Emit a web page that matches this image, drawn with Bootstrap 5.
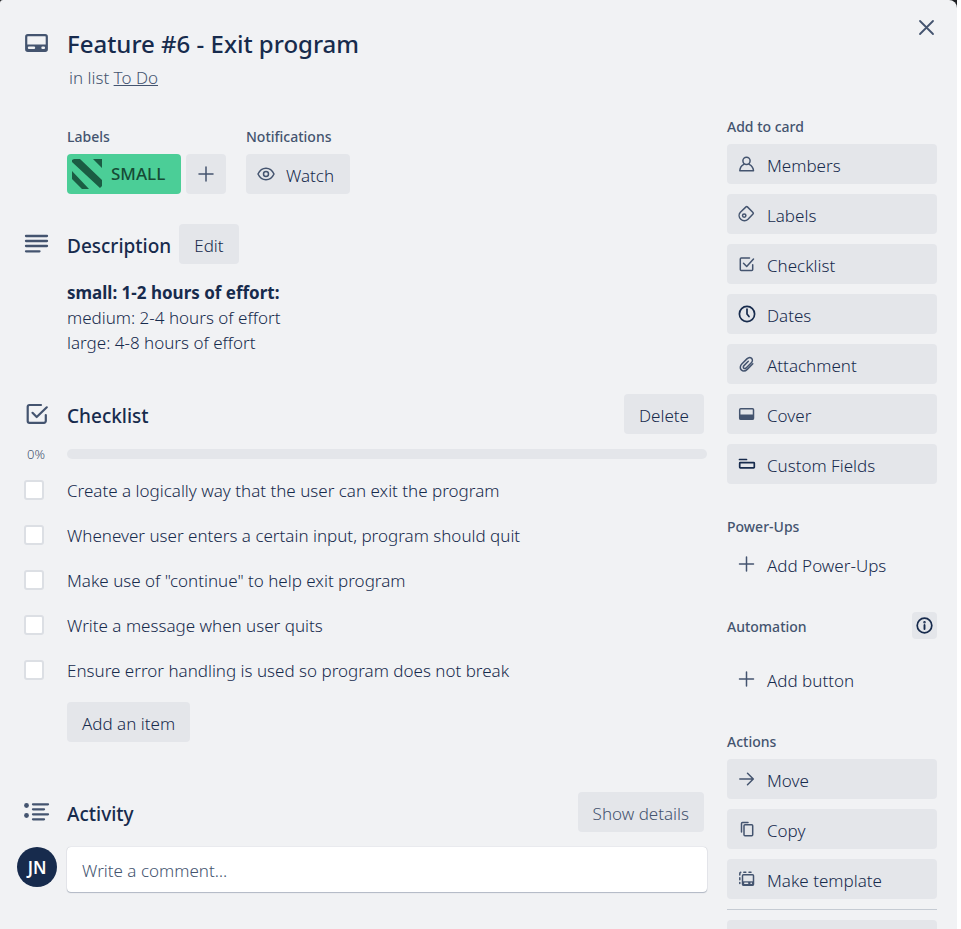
<!DOCTYPE html>
<html lang="en">
<head>
<meta charset="utf-8">
<meta name="viewport" content="width=device-width, initial-scale=1">
<title>Feature #6 - Exit program</title>
<link href="https://cdn.jsdelivr.net/npm/bootstrap@5.3.0/dist/css/bootstrap.min.css" rel="stylesheet">
<style>
  :root { --ink: #172b4d; --subtle: #44546f; --surface: #f1f2f4; --fill: #e4e6ea; }
  body { font-family: "Noto Sans", "Open Sans", sans-serif; font-size: 17px; font-weight: 300; line-height: 25px; color: var(--ink); background: #fff; height: 100vh; overflow: hidden; }
  .backdrop { background: #1d1f22; margin-right: 4px; }
  .dialog-card { background: var(--surface); border-radius: 3px 8px 0 0; padding: 24px 20px 0 17px; min-height: 100vh; gap: 20px; }
  .close-btn { top: 17px; right: 20px; }
  h1, h2, h3, p, ul { margin: 0; }
  strong { font-weight: 700; }
  .dialog-title { font-size: 24px; font-weight: 500; line-height: 40px; }
  .subtle, .subtle a { color: var(--subtle); }
  .list-line { padding: 1px 0 0 2px; }
  .section-title { font-size: 19px; font-weight: 500; line-height: 40px; padding-top: 2px; height: 40px; }
  .group-title { font-size: 14px; font-weight: 500; line-height: 20px; margin-bottom: 7px; color: var(--subtle); }
  .btn-soft { --bs-btn-bg: var(--fill); --bs-btn-hover-bg: #d5d9e0; --bs-btn-color: var(--ink); --bs-btn-border-width: 0; --bs-btn-border-radius: 4px; --bs-btn-font-size: 17px; --bs-btn-font-weight: 300; --bs-btn-line-height: 25px; --bs-btn-padding-x: 15px; --bs-btn-padding-y: 0; height: 40px; white-space: nowrap; }
  .btn-soft > span { display: block; padding-top: 3px; }
  .btn-plain { --bs-btn-bg: transparent; }
  .icon-btn { --bs-btn-padding-x: 10px; display: flex; align-items: center; gap: 10px; }
  .gutter { flex: 0 0 50px; padding-left: 7px; }
  .indent { padding-left: 50px; }
  .dialog-aside { flex: 0 0 210px; margin-top: 93px; }
  .aside-group { margin-bottom: 33px; }
  .aside-stack { display: grid; gap: 10px; }
  .automation-stack { margin-top: 22px; }
  svg { display: block; flex: none; color: var(--subtle); fill: none; stroke: currentColor; stroke-width: 1.5; stroke-linecap: round; stroke-linejoin: round; }
  .ink-icon { color: var(--ink); }
  .meta-row { margin-top: 37px; gap: 20px; }
  .label-chip { --bs-btn-bg: #4bce97; --bs-btn-color: #164b35; --bs-btn-hover-bg: #7ee2b8; --bs-btn-hover-color: #164b35; --bs-btn-border-width: 0; --bs-btn-border-radius: 4px; --bs-btn-font-size: 17px; --bs-btn-font-weight: 500; --bs-btn-padding-x: 5px; --bs-btn-padding-y: 0; height: 40px; width: 114px; display: flex; align-items: center; gap: 9px; }
  .label-chip svg { color: #1b5c43; }
  .chip-row { gap: 5px; }
  .description-section { margin-top: 30px; }
  .description { padding-top: 16px; }
  .checklist-section { margin-top: 39px; }
  .activity-section { margin-top: 50px; }
  .comment-row { margin-top: 15px; }
  .header-action { margin-right: 3px; }
  .progress-row { margin-top: 9px; }
  .percent { flex: 0 0 50px; font-size: 13px; line-height: 20px; padding: 1px 0 0 10px; }
  .progress-line { --bs-progress-height: 10px; --bs-progress-bg: var(--fill); --bs-progress-border-radius: 5px; }
  .progress-line .progress-bar { background: #5ba4cf; }
  .check-list { padding-top: 3px; }
  .check-row { height: 45px; }
  .check-row label { padding-top: 1px; }
  .check-row .form-check-input { display: block; width: 20px; height: 20px; margin: 0; border: 2px solid #dcdfe4; border-radius: 3px; background-color: #fff; }
  .add-item { margin-top: 10px; }
  .avatar-dot { width: 40px; height: 40px; background: var(--ink); color: #fff; font-size: 17px; font-weight: 600; }
  .avatar-col { flex: 0 0 50px; }
  .comment-box { height: 45px; border: 0; border-radius: 4px; padding: 2px 15px 0; font-size: 17px; font-weight: 300; color: var(--ink); box-shadow: 0 1px 1px #091e4240, 0 0 1px #091e424f; }
  .comment-box::placeholder { color: var(--subtle); opacity: 1; }
  .info-btn { --bs-btn-padding-x: 4px; width: 25px; height: 27px; margin: -5px 0 -2px; }
  .aside-rule { margin: 10px 0; border-top: 1px solid #8590a2; opacity: .4; }
</style>
</head>
<body>
<div class="backdrop">
<main class="dialog-card position-relative d-flex">
  <button type="button" class="close-btn btn p-0 border-0 position-absolute" aria-label="Close">
    <svg width="21" height="21" viewBox="0 0 21 21"><path d="M4 4l13 13M17 4L4 17" stroke-width="1.800"/></svg>
  </button>

  <div class="flex-grow-1">
    <header class="d-flex">
      <div class="gutter pt-2"><svg width="25" height="22" viewBox="0 0 25 22"><rect x="2.200" y="3.200" width="20.600" height="15.600" rx="1.600" stroke-width="2.200"/><path d="M2 12.500h21v6h-21z" fill="currentColor" stroke="none"/><path d="M5 15.700h5M18.500 15.700h1.400" stroke="#f1f2f4" stroke-width="2.400"/></svg></div>
      <div>
        <h1 class="dialog-title">Feature #6 - Exit program</h1>
        <p class="list-line subtle">in list <a href="#">To Do</a></p>
      </div>
    </header>

    <div class="meta-row indent d-flex">
      <section>
        <h3 class="group-title">Labels</h3>
        <div class="chip-row d-flex">
          <button type="button" class="btn label-chip">
            <svg width="30" height="30" viewBox="0 0 30 30"><path d="M2 0h6l22 21v6l-2 2L0 3V1zM21 0h9v9zM0 12l17 18h-7L0 20z" fill="currentColor" stroke="none"/></svg>
            <span>SMALL</span>
          </button>
          <button type="button" class="btn btn-soft icon-btn" aria-label="Add a label">
            <svg width="20" height="20" viewBox="0 0 20 20"><path d="M10 3v14M3 10h14"/></svg>
          </button>
        </div>
      </section>
      <section>
        <h3 class="group-title">Notifications</h3>
        <button type="button" class="btn btn-soft icon-btn pe-3">
          <svg width="20" height="20" viewBox="0 0 20 20"><path d="M2 10c1.800-3.800 4.600-5.800 8-5.800s6.200 2 8 5.800c-1.800 3.800-4.600 5.800-8 5.800S3.800 13.800 2 10z"/><circle cx="10" cy="10" r="2.500"/></svg>
          <span>Watch</span>
        </button>
      </section>
    </div>

    <section class="description-section">
      <div class="d-flex">
        <div class="gutter pt-2"><svg width="25" height="24" viewBox="0 0 25 24"><path d="M2 4h21M2 9h21M2 14h21M2 19.300h13.500" stroke-width="2.300"/></svg></div>
        <h2 class="section-title">Description</h2>
        <button type="button" class="btn btn-soft ms-2"><span>Edit</span></button>
      </div>
      <div class="description indent">
        <p><strong>small: 1-2 hours of effort:</strong><br>medium: 2-4 hours of effort<br>large: 4-8 hours of effort</p>
      </div>
    </section>

    <section class="checklist-section">
      <div class="d-flex">
        <div class="gutter pt-2"><svg width="26" height="25" viewBox="0 0 26 25"><path d="M17 3H5.500A1.800 1.800 0 0 0 3.700 4.800V19a1.800 1.800 0 0 0 1.800 1.800H20a1.800 1.800 0 0 0 1.800-1.800V13" stroke-width="2.200"/><path d="M8.500 10.800l4.200 4.200L22.800 5.300" stroke-width="2.200"/></svg></div>
        <h2 class="section-title">Checklist</h2>
        <button type="button" class="btn btn-soft header-action ms-auto"><span>Delete</span></button>
      </div>
      <div class="progress-row d-flex align-items-center">
        <div class="percent subtle">0%</div>
        <div class="progress progress-line flex-grow-1" role="progressbar" aria-label="Checklist progress" aria-valuenow="0" aria-valuemin="0" aria-valuemax="100"><div class="progress-bar" style="width: 0%"></div></div>
      </div>
      <ul class="check-list list-unstyled">
        <li class="check-row d-flex align-items-center"><div class="gutter"><input class="form-check-input" type="checkbox" id="item1"></div><label for="item1">Create a logically way that the user can exit the program</label></li>
        <li class="check-row d-flex align-items-center"><div class="gutter"><input class="form-check-input" type="checkbox" id="item2"></div><label for="item2">Whenever user enters a certain input, program should quit</label></li>
        <li class="check-row d-flex align-items-center"><div class="gutter"><input class="form-check-input" type="checkbox" id="item3"></div><label for="item3">Make use of "continue" to help exit program</label></li>
        <li class="check-row d-flex align-items-center"><div class="gutter"><input class="form-check-input" type="checkbox" id="item4"></div><label for="item4">Write a message when user quits</label></li>
        <li class="check-row d-flex align-items-center"><div class="gutter"><input class="form-check-input" type="checkbox" id="item5"></div><label for="item5">Ensure error handling is used so program does not break</label></li>
      </ul>
      <div class="add-item indent"><button type="button" class="btn btn-soft d-block"><span>Add an item</span></button></div>
    </section>

    <section class="activity-section">
      <div class="d-flex">
        <div class="gutter pt-2 ps-1"><svg width="30" height="24" viewBox="0 0 30 24"><path d="M12 4.300h15M12 9.300h11M12 14.300h15M12 19.300h11" stroke-width="2.300"/><circle cx="5.500" cy="5.500" r="2.400" fill="currentColor" stroke="none"/><circle cx="5.500" cy="15.500" r="2.400" fill="currentColor" stroke="none"/></svg></div>
        <h2 class="section-title">Activity</h2>
        <button type="button" class="btn btn-soft subtle header-action ms-auto"><span>Show details</span></button>
      </div>
      <div class="comment-row d-flex">
        <div class="avatar-col"><div class="avatar-dot rounded-circle d-flex align-items-center justify-content-center">JN</div></div>
        <input type="text" class="comment-box form-control" placeholder="Write a comment…" aria-label="Write a comment">
      </div>
    </section>
  </div>

  <aside class="dialog-aside">
    <section class="aside-group">
      <h3 class="group-title">Add to card</h3>
      <div class="aside-stack">
        <button type="button" class="btn btn-soft icon-btn"><svg width="20" height="20" viewBox="0 0 20 20"><circle cx="9.500" cy="6.800" r="3.600"/><path d="M6.800 10.300C4.500 11.500 3 13.500 2.800 16.800h13.700C16.300 13.500 14.600 11.500 12.200 10.300"/></svg><span>Members</span></button>
        <button type="button" class="btn btn-soft icon-btn"><svg width="20" height="20" viewBox="0 0 20 20"><path d="M3.400 8.200L9 2.900a1 1 0 0 1 1.400 0l5.600 5.600a1 1 0 0 1 0 1.400l-5 5.300C9 17.200 5.800 17.100 3.800 15.200 1.700 13.200 1.600 10.100 3.400 8.200z"/><circle cx="7.200" cy="11.600" r="1.700"/></svg><span>Labels</span></button>
        <button type="button" class="btn btn-soft icon-btn"><svg width="20" height="20" viewBox="0 0 20 20"><path d="M12.500 4H4.300a1 1 0 0 0-1 1v10.400a1 1 0 0 0 1 1h10.400a1 1 0 0 0 1-1v-4.600"/><path d="M6.500 9.300l3.200 3.200L16.500 5"/></svg><span>Checklist</span></button>
        <button type="button" class="btn btn-soft icon-btn"><svg class="ink-icon" width="20" height="20" viewBox="0 0 20 20"><circle cx="10" cy="10" r="7.600" stroke-width="1.700"/><path d="M10 5v5l2 2.500" stroke-width="1.700"/></svg><span>Dates</span></button>
        <button type="button" class="btn btn-soft icon-btn"><svg width="20" height="20" viewBox="0 0 20 20"><path d="M15.800 9.800l-5.300 5.300c-2 2-4.600 2.300-6.200.8s-1.300-4.100.7-6.100l4.900-4.900c1.500-1.500 3.500-1.700 4.700-.5s1 3.100-.5 4.600l-4.800 4.800c-.8.800-1.900 1-2.600.3s-.5-1.700.3-2.500l4.300-4.300"/></svg><span>Attachment</span></button>
        <button type="button" class="btn btn-soft icon-btn"><svg width="20" height="20" viewBox="0 0 20 20"><rect x="2.700" y="4.700" width="13.800" height="10.600" rx="1"/><path d="M2.500 10.500h14v5h-14z" fill="currentColor" stroke="none"/></svg><span>Cover</span></button>
        <button type="button" class="btn btn-soft icon-btn"><svg class="ink-icon" width="20" height="20" viewBox="0 0 20 20"><rect x="2.700" y="8.700" width="14.600" height="5.200" rx=".6" stroke-width="1.700"/><path d="M2.500 5.500h7" stroke-width="1.700"/></svg><span>Custom Fields</span></button>
      </div>
    </section>

    <section class="aside-group">
      <h3 class="group-title">Power-Ups</h3>
      <div class="aside-stack">
        <button type="button" class="btn btn-soft btn-plain icon-btn"><svg width="20" height="20" viewBox="0 0 20 20"><path d="M9.500 3v14M2.500 10h14"/></svg><span>Add Power-Ups</span></button>
      </div>
    </section>

    <section class="aside-group">
      <div class="d-flex justify-content-between">
        <h3 class="group-title mb-0">Automation</h3>
        <button type="button" class="btn btn-soft info-btn" aria-label="About automation"><svg class="ink-icon" width="17" height="17" viewBox="0 0 17 17"><circle cx="8.500" cy="8.500" r="7.300" stroke-width="1.700"/><path d="M8.500 8v4" stroke-width="1.900"/><circle cx="8.500" cy="5.200" r=".5"/></svg></button>
      </div>
      <div class="aside-stack automation-stack">
        <button type="button" class="btn btn-soft btn-plain icon-btn"><svg width="20" height="20" viewBox="0 0 20 20"><path d="M9.500 3v14M2.500 10h14"/></svg><span>Add button</span></button>
      </div>
    </section>

    <section>
      <h3 class="group-title">Actions</h3>
      <div class="aside-stack">
        <button type="button" class="btn btn-soft icon-btn"><svg width="20" height="20" viewBox="0 0 20 20"><path d="M2.800 10h13.400M10.500 4.200L16.300 10l-5.800 5.800"/></svg><span>Move</span></button>
        <button type="button" class="btn btn-soft icon-btn"><svg width="20" height="20" viewBox="0 0 20 20"><rect x="7" y="5.800" width="8.700" height="11" rx="1"/><path d="M4.500 13V4.400a1 1 0 0 1 1-1H11"/></svg><span>Copy</span></button>
        <button type="button" class="btn btn-soft icon-btn"><svg width="20" height="20" viewBox="0 0 20 20"><rect x="5.500" y="5.800" width="11" height="10.400" rx="1"/><path d="M5.500 12.300h11v4h-11z" fill="currentColor" stroke="none"/><path d="M7.700 14.200h3M14 14.200h.4" stroke="#e4e6ea" stroke-width="1.400"/><path d="M2.800 14.500v-1M2.800 10.800v-2M2.800 6v-1.200a1.500 1.500 0 0 1 1-1.500M6.800 3.200h2M12 3.200h2"/></svg><span>Make template</span></button>
      </div>
      <hr class="aside-rule">
      <button type="button" class="btn btn-soft w-100" aria-hidden="true"></button>
    </section>
  </aside>
</main>
</div>
<script src="https://cdn.jsdelivr.net/npm/bootstrap@5.3.0/dist/js/bootstrap.bundle.min.js"></script>
</body>
</html>
